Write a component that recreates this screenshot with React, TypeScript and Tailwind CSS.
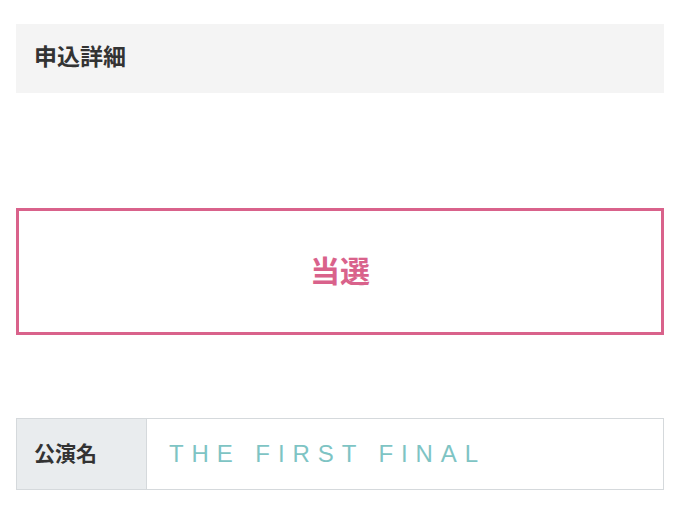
const JP = "font-['Noto_Sans_CJK_JP',sans-serif]";

export default function App() {
  return (
    <div className="min-h-[514px] bg-white px-4 pt-6">
      <div className="flex h-[69px] items-center bg-[#f4f4f4] px-[18px] pb-[6px]">
        <h2 className={`${JP} text-[23px] font-bold leading-none text-[#333]`}>申込詳細</h2>
      </div>

      <div className="mt-[115px] flex h-[127px] items-center justify-center border-[3px] border-[#d9628b] pb-[6px]">
        <span className={`${JP} text-[30px] font-bold leading-none text-[#d9628b]`}>当選</span>
      </div>

      <table className="mt-[83px] w-full border-collapse">
        <tbody>
          <tr className="h-[71px]">
            <th className={`${JP} w-[130px] border border-[#d5d9dc] bg-[#e9ecee] pb-[2px] pl-[17px] text-left text-[21px] font-bold text-[#333]`}>
              公演名
            </th>
            <td className="border border-[#d5d9dc] pl-[22px] font-['Liberation_Sans',Arial,sans-serif] text-[24px] tracking-[0.33em] text-[#7ec4c4]">
              THE FIRST FINAL
            </td>
          </tr>
        </tbody>
      </table>
    </div>
  );
}
